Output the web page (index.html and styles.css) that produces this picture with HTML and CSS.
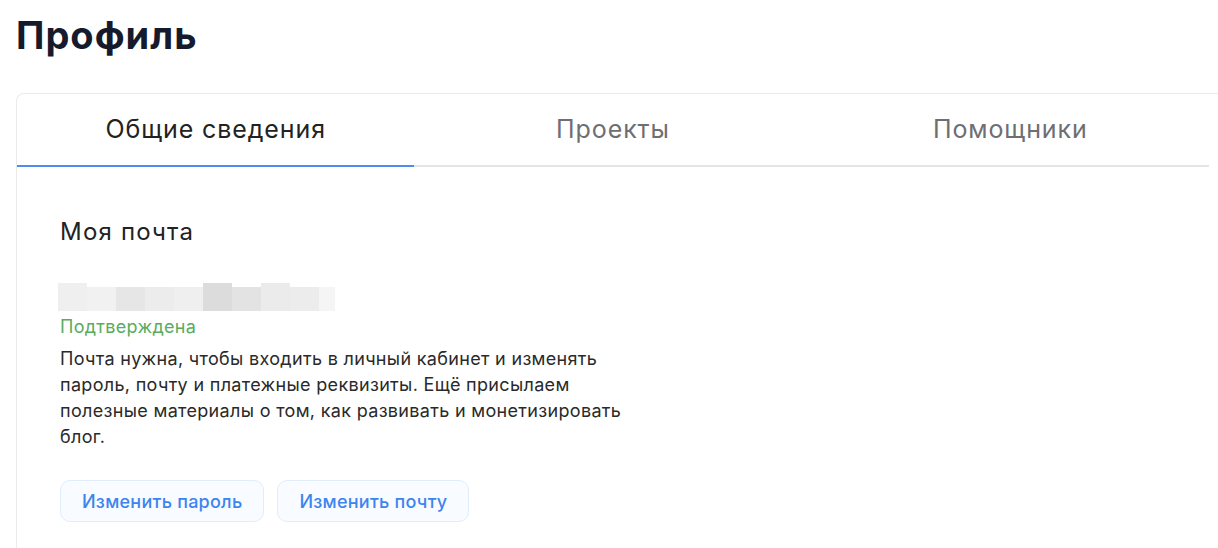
FILE: index.html
```html
<!DOCTYPE html>
<html lang="ru">

<head>
    <meta charset="UTF-8">
    <meta name="viewport" content="width=device-width, initial-scale=1.0">
    <title>Профиль</title>
    <link rel="stylesheet" href="styles.css">
</head>

<body>
    <h1 class="page-title">Профиль</h1>

    <div class="card">
        <ul class="tabs">
            <li class="tab active">Общие сведения</li>
            <li class="tab">Проекты</li>
            <li class="tab">Помощники</li>
        </ul>

        <div class="section">
            <h2 class="section-title">Моя почта</h2>

            <!-- email is hidden behind a pixelated block -->
            <div class="email-blur">
                <span class="px tall" style="background:#efefef"></span>
                <span class="px" style="background:#f1f1f1"></span>
                <span class="px" style="background:#e6e6e6"></span>
                <span class="px" style="background:#ececec"></span>
                <span class="px" style="background:#efefef"></span>
                <span class="px tall" style="background:#dcdcdc"></span>
                <span class="px" style="background:#e3e3e3"></span>
                <span class="px tall" style="background:#ebebeb"></span>
                <span class="px" style="background:#ececec"></span>
                <span class="px short" style="background:#f5f5f5"></span>
            </div>

            <div class="status">Подтверждена</div>
            <p class="hint">Почта нужна, чтобы входить в личный кабинет и изменять пароль, почту и платежные
                реквизиты. Ещё присылаем полезные материалы о том, как развивать и монетизировать блог.</p>

            <div class="actions">
                <button class="btn">Изменить пароль</button>
                <button class="btn">Изменить почту</button>
            </div>
        </div>
    </div>
</body>

</html>
```

FILE: styles.css
```css
html,
body {
    height: 100%;
}

body {
    margin: 0;
    padding: 0 0 0 16px;
    box-sizing: border-box;
    font-family: Inter, "Noto Sans", sans-serif;
    color: #222;
    background: #fff;
    overflow: hidden;
}

.page-title {
    margin: 0;
    padding-top: 12px;
    height: 93px;
    box-sizing: border-box;
    font-size: 38px;
    line-height: 46px;
    font-weight: 700;
    color: #151a2d;
    letter-spacing: 1px;
}

.card {
    width: 1230px;
    height: 455px;
    box-sizing: border-box;
    border: 1px solid #ebebeb;
    border-bottom: none;
    border-radius: 8px 8px 0 0;
}

.tabs {
    list-style: none;
    margin: 0;
    padding: 0;
    width: 1192px;
    display: flex;
    border-bottom: 2px solid #e4e4e8;
}

.tab {
    flex: 1;
    text-align: center;
    font-size: 25px;
    letter-spacing: 0.9px;
    line-height: 71px;
    color: #6e6e73;
    margin-bottom: -2px;
    border-bottom: 2px solid transparent;
}

.tab.active {
    color: #222;
    border-bottom-color: #4f8cf0;
}

.section {
    padding: 50px 0 0 43px;
}

.section-title {
    margin: 0;
    font-size: 24px;
    line-height: 30px;
    font-weight: 400;
    letter-spacing: 1.2px;
    color: #222;
}

.email-blur {
    display: flex;
    align-items: flex-end;
    margin: 36px 0 0 -2px;
    height: 28px;
}

.px {
    width: 29px;
    height: 24px;
}

.px.tall {
    height: 28px;
}

.px.short {
    width: 16px;
}

.status {
    margin-top: 4px;
    font-size: 18px;
    line-height: 24px;
    letter-spacing: 0.3px;
    color: #5aab5e;
}

.hint {
    margin: 7px 0 0;
    width: 575px;
    font-size: 18px;
    line-height: 26px;
    letter-spacing: 0.32px;
    color: #2a2a2a;
}

.actions {
    display: flex;
    gap: 13px;
    margin-top: 30px;
}

.btn {
    font-family: inherit;
    font-size: 18px;
    font-weight: 500;
    letter-spacing: 0.25px;
    color: #3d84ef;
    background: #f8fbff;
    border: 1px solid #e2edfc;
    border-radius: 10px;
    height: 42px;
    padding: 0 21px;
}
```
